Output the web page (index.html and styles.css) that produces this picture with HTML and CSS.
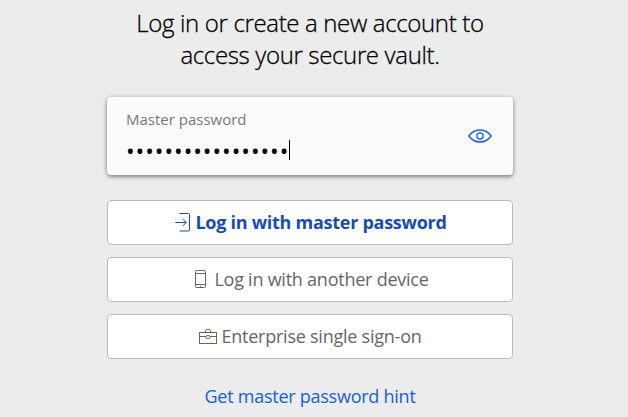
FILE: index.html
```html
<!DOCTYPE html>
<html lang="en">
<head>
<meta charset="utf-8">
<title>Log in</title>
<link rel="stylesheet" href="styles.css">
</head>
<body>
<main class="login">
  <h1 class="lead"><span>Log in or create a new account to</span><br><span>access your secure vault.</span></h1>
  <div class="field">
    <div class="field-body">
      <div class="label"><span>Master password</span></div>
      <div class="value"><span class="dots">•••••••••••••••••</span><span class="caret"></span></div>
    </div>
    <svg class="eye" width="24" height="14" viewBox="0 0 24 14"><path d="M.8 7C6.5-1 17.5-1 23.2 7 17.5 15 6.5 15 .8 7Z"/><circle cx="12" cy="7" r="3.1"/></svg>
  </div>
  <div class="buttons">
    <button class="btn primary"><svg width="16" height="19" viewBox="0 0 16 19"><path d="M4.500 .5h9q1 0 1 1v15.500q0 1-1 1h-9M.3 9.500h10.700M7.700 6l3.500 3.500L7.700 13"/></svg><span>Log in with master password</span></button>
    <button class="btn device"><svg width="12" height="19" viewBox="0 0 12 19"><rect x=".5" y=".5" width="10" height="17" rx="1"/><path d="M.5 3.500h10M.5 14.500h10M5 16.500h1"/></svg><span>Log in with another device</span></button>
    <button class="btn sso"><svg width="19" height="16" viewBox="0 0 19 16"><rect x=".5" y="3.500" width="17" height="11"/><path d="M6.500 3.500v-2q0-1 1-1h3q1 0 1 1v2M.5 7.500h6.700M10.800 7.500h6.700"/><rect x="7.200" y="6.500" width="3.600" height="3" rx="1"/></svg><span>Enterprise single sign-on</span></button>
  </div>
  <a class="hint">Get master password hint</a>
</main>
</body>
</html>
```
FILE: styles.css
```css
* { box-sizing: border-box; }
body {
  margin: 0;
  height: 417px;
  overflow: hidden;
  background: #ececec;
  font-family: "Open Sans", sans-serif;
}
.login {
  width: 406px;
  margin-left: 107px;
  padding-top: 7px;
}
.lead {
  margin: 0 0 26px;
  font-size: 24px;
  line-height: 32px;
  font-weight: 300;
  letter-spacing: -.35px;
  -webkit-text-stroke: .3px #000;
  text-align: center;
  color: #000;
  white-space: nowrap;
}
.field {
  display: flex;
  align-items: center;
  justify-content: space-between;
  height: 78px;
  padding: 0 21px 0 19px;
  border-radius: 4px;
  background: #fbfbfb;
  box-shadow: 0 2px 4px rgba(0, 0, 0, .4), 0 0 5px rgba(0, 0, 0, .12);
}
.label {
  font-size: 15px;
  line-height: 20px;
  color: #777;
}
.field-body { padding-bottom: 4px; }
.value {
  display: flex;
  align-items: center;
  height: 20px;
  margin-top: 11px;
  color: #000;
}
.dots {
  font-size: 23px;
  line-height: 20px;
  width: 163px;
  letter-spacing: .96px;
  white-space: nowrap;
  padding-top: 3px;
}
.caret {
  width: 1px;
  height: 20px;
  background: #000;
}
svg {
  flex: none;
  fill: none;
  stroke: currentColor;
  stroke-width: 1;
}
.eye {
  color: #175ddc;
  stroke-width: 1.3;
}
.buttons {
  display: grid;
  gap: 12px;
  margin-top: 25px;
}
.btn {
  display: flex;
  align-items: center;
  justify-content: center;
  gap: 6px;
  height: 45px;
  padding: 0;
  border: 1px solid #bbb;
  border-radius: 4px;
  background: #fff;
  font: 400 18px/24px "Open Sans", sans-serif;
  letter-spacing: -.24px;
  color: #666;
}
.btn span { padding-bottom: 2px; }
.primary {
  gap: 4px;
  padding-left: 2px;
  font-weight: 700;
  letter-spacing: -.27px;
  color: #174bb8;
}
.device {
  gap: 7px;
  padding-left: 4px;
}
.sso {
  gap: 3px;
  padding-left: 1px;
}
.hint {
  display: block;
  margin-top: 25px;
  font-size: 18px;
  line-height: 24px;
  letter-spacing: -.25px;
  text-align: center;
  color: #175ddc;
}
```
